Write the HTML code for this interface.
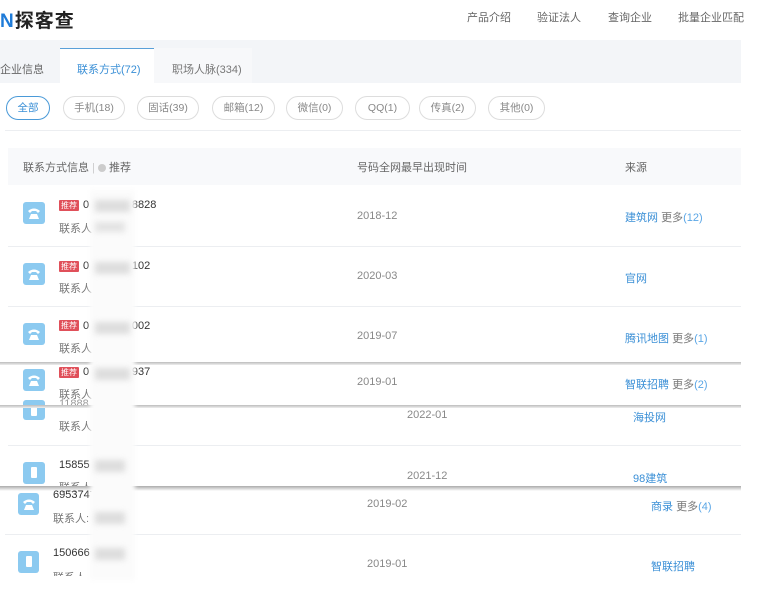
<!DOCTYPE html>
<html><head><meta charset="utf-8"><style>
*{margin:0;padding:0;box-sizing:border-box}
body{width:768px;height:594px;overflow:hidden;background:#fff;font-family:"Liberation Sans","Noto Sans CJK SC",sans-serif;font-size:11px;color:#777;position:relative}
.a{position:absolute;white-space:nowrap}
.nav{font-size:11px;color:#666;top:9px}
.pill{position:absolute;top:96px;height:24px;border:1px solid #ddd;border-radius:12px;font-size:10.5px;color:#888;text-align:center;line-height:22px}
.ic{position:absolute;width:22px;height:22px;background:#8ccaf0;border-radius:3px}
.ic svg{position:absolute;left:3px;top:3px}
.tag{position:absolute;background:#e0505a;color:#fff;font-size:8px;line-height:11px;padding:0 2px;border-radius:1px}
.num{color:#333;font-size:11px}
.dt{color:#888;font-size:11px}
.src{color:#3a8fd6;font-size:11px}
.src b{font-weight:normal;color:#777}
.src i{font-style:normal;color:#5aa6e6}
.hl{position:absolute;height:1px;background:#eceef1}
.sh{position:absolute;left:0;width:741px;height:3px;background:linear-gradient(#bbb,#eee)}
</style></head><body>
<div class="a" style="left:0;top:6px;font-size:19px;font-weight:bold;color:#222;letter-spacing:1px"><span style="color:#1e7bd8">N</span>探客查</div>
<div class="a nav" style="left:467px">产品介绍</div>
<div class="a nav" style="left:537px">验证法人</div>
<div class="a nav" style="left:608px">查询企业</div>
<div class="a nav" style="left:678px">批量企业匹配</div>

<div class="a" style="left:0;top:40px;width:741px;height:43px;background:#f3f5f8"></div>
<div class="a" style="left:154px;top:48px;width:98px;height:35px;background:#f7f8fa"></div>
<div class="a" style="left:60px;top:48px;width:94px;height:36px;background:#fff;border-top:1px solid #5aa0d8"></div>
<div class="a" style="left:0;top:61px;font-size:11px;color:#666">企业信息</div>
<div class="a" style="left:77px;top:61px;font-size:11px;color:#3a8fd6">联系方式(72)</div>
<div class="a" style="left:172px;top:61px;font-size:11px;color:#777">职场人脉(334)</div>

<div class="pill" style="left:6px;width:44px;border-color:#4a9ad8;color:#3a8fd6">全部</div>
<div class="pill" style="left:63px;width:62px">手机(18)</div>
<div class="pill" style="left:137px;width:62px">固话(39)</div>
<div class="pill" style="left:212px;width:63px">邮箱(12)</div>
<div class="pill" style="left:286px;width:57px">微信(0)</div>
<div class="pill" style="left:355px;width:55px">QQ(1)</div>
<div class="pill" style="left:419px;width:57px">传真(2)</div>
<div class="pill" style="left:488px;width:57px">其他(0)</div>
<div class="hl" style="left:5px;top:130px;width:736px"></div>

<div class="a" style="left:8px;top:148px;width:733px;height:37px;background:#f8f9fb"></div>
<div class="a" style="left:23px;top:159px;color:#666">联系方式信息 <span style="color:#ccc">|</span> <span style="display:inline-block;width:8px;height:8px;border-radius:50%;background:#ccc;vertical-align:-1px"></span> 推荐</div>
<div class="a" style="left:357px;top:159px;color:#666">号码全网最早出现时间</div>
<div class="a" style="left:625px;top:159px;color:#666">来源</div>

<!-- row1 -->
<div class="ic" style="left:23px;top:202px"><svg width="16" height="16"><path d="M2 6Q8 1 14 6L12 8L10 6H6L4 8Z M5 9H11L13 14H3Z" fill="#fff"/></svg></div>
<div class="tag" style="left:59px;top:200px">推荐</div>
<div class="a num" style="left:83px;top:199px">0&nbsp;&nbsp;&nbsp;&nbsp;&nbsp;&nbsp;&nbsp;&nbsp;&nbsp;&nbsp;&nbsp;&nbsp;&nbsp;&nbsp;8828</div>
<div class="a" style="left:59px;top:220px">联系人</div>
<div class="a dt" style="left:357px;top:210px">2018-12</div>
<div class="a src" style="left:625px;top:209px">建筑网 <b>更多</b><i>(12)</i></div>
<div class="hl" style="left:8px;top:246px;width:733px"></div>
<!-- row2 -->
<div class="ic" style="left:23px;top:263px"><svg width="16" height="16"><path d="M2 6Q8 1 14 6L12 8L10 6H6L4 8Z M5 9H11L13 14H3Z" fill="#fff"/></svg></div>
<div class="tag" style="left:59px;top:261px">推荐</div>
<div class="a num" style="left:83px;top:260px">0&nbsp;&nbsp;&nbsp;&nbsp;&nbsp;&nbsp;&nbsp;&nbsp;&nbsp;&nbsp;&nbsp;&nbsp;&nbsp;&nbsp;102</div>
<div class="a" style="left:59px;top:280px">联系人</div>
<div class="a dt" style="left:357px;top:270px">2020-03</div>
<div class="a src" style="left:625px;top:270px">官网</div>
<div class="hl" style="left:8px;top:306px;width:733px"></div>
<!-- row3 -->
<div class="ic" style="left:23px;top:323px"><svg width="16" height="16"><path d="M2 6Q8 1 14 6L12 8L10 6H6L4 8Z M5 9H11L13 14H3Z" fill="#fff"/></svg></div>
<div class="tag" style="left:59px;top:320px">推荐</div>
<div class="a num" style="left:83px;top:320px">0&nbsp;&nbsp;&nbsp;&nbsp;&nbsp;&nbsp;&nbsp;&nbsp;&nbsp;&nbsp;&nbsp;&nbsp;&nbsp;&nbsp;002</div>
<div class="a" style="left:59px;top:340px">联系人</div>
<div class="a dt" style="left:357px;top:330px">2019-07</div>
<div class="a src" style="left:625px;top:330px">腾讯地图 <b>更多</b><i>(1)</i></div>
<div class="sh" style="top:362px"></div>
<!-- row4 -->
<div class="ic" style="left:23px;top:369px"><svg width="16" height="16"><path d="M2 6Q8 1 14 6L12 8L10 6H6L4 8Z M5 9H11L13 14H3Z" fill="#fff"/></svg></div>
<div class="tag" style="left:59px;top:367px">推荐</div>
<div class="a num" style="left:83px;top:366px">0&nbsp;&nbsp;&nbsp;&nbsp;&nbsp;&nbsp;&nbsp;&nbsp;&nbsp;&nbsp;&nbsp;&nbsp;&nbsp;&nbsp;937</div>
<div class="a" style="left:59px;top:386px">联系人</div>
<div class="a dt" style="left:357px;top:376px">2019-01</div>
<div class="a src" style="left:625px;top:376px">智联招聘 <b>更多</b><i>(2)</i></div>
<!-- row5 -->
<div class="ic" style="left:23px;top:400px;height:20px"><svg width="16" height="16"><rect x="5" y="2" width="6" height="11" rx="1" fill="#fff"/></svg></div>
<div class="a num" style="left:59px;top:398px;color:#999">11888</div>
<div class="sh" style="top:405px"></div>
<div class="a" style="left:59px;top:418px">联系人</div>
<div class="a dt" style="left:407px;top:409px">2022-01</div>
<div class="a src" style="left:633px;top:409px">海投网</div>
<div class="hl" style="left:8px;top:445px;width:733px"></div>
<!-- row6 -->
<div class="ic" style="left:23px;top:462px"><svg width="16" height="16"><rect x="5" y="2" width="6" height="11" rx="1" fill="#fff"/></svg></div>
<div class="a num" style="left:59px;top:459px">15855</div>
<div class="a" style="left:59px;top:479px">联系人</div>
<div class="a dt" style="left:407px;top:470px">2021-12</div>
<div class="a src" style="left:633px;top:470px">98建筑</div>
<div class="a" style="left:0;top:486px;width:741px;height:5px;background:linear-gradient(#aaa,#fff)"></div>
<!-- row7 -->
<div class="ic" style="left:18px;top:493px;width:21px"><svg width="16" height="16"><path d="M2 6Q8 1 14 6L12 8L10 6H6L4 8Z M5 9H11L13 14H3Z" fill="#fff"/></svg></div>
<div class="a num" style="left:53px;top:489px">695374</div>
<div class="a" style="left:53px;top:510px">联系人:</div>
<div class="a dt" style="left:367px;top:498px">2019-02</div>
<div class="a src" style="left:651px;top:498px">商录 <b>更多</b><i>(4)</i></div>
<div class="hl" style="left:5px;top:534px;width:736px"></div>
<!-- row8 -->
<div class="ic" style="left:18px;top:551px;width:21px"><svg width="16" height="16"><rect x="5" y="2" width="6" height="11" rx="1" fill="#fff"/></svg></div>
<div class="a num" style="left:53px;top:547px">150666</div>
<div class="a" style="left:53px;top:569px">联系人</div>
<div class="a dt" style="left:367px;top:558px">2019-01</div>
<div class="a src" style="left:651px;top:558px">智联招聘</div>
<div class="a" style="left:0;top:576px;width:768px;height:18px;background:#fff"></div>

<!-- blur column -->
<div class="a" style="left:90px;top:190px;width:45px;height:390px;background:#fbfbfb;filter:blur(2px)"></div>
<div class="a" style="left:95px;top:200px;width:35px;height:12px;background:#ddd;filter:blur(3px)"></div>
<div class="a" style="left:95px;top:222px;width:30px;height:10px;background:#e3e3e3;filter:blur(3px)"></div>
<div class="a" style="left:95px;top:262px;width:35px;height:12px;background:#ddd;filter:blur(3px)"></div>
<div class="a" style="left:95px;top:322px;width:35px;height:12px;background:#ddd;filter:blur(3px)"></div>
<div class="a" style="left:95px;top:368px;width:35px;height:12px;background:#ddd;filter:blur(3px)"></div>
<div class="a" style="left:95px;top:460px;width:30px;height:12px;background:#ddd;filter:blur(3px)"></div>
<div class="a" style="left:95px;top:512px;width:30px;height:12px;background:#ddd;filter:blur(3px)"></div>
<div class="a" style="left:95px;top:548px;width:30px;height:12px;background:#ddd;filter:blur(3px)"></div>
</body></html>
